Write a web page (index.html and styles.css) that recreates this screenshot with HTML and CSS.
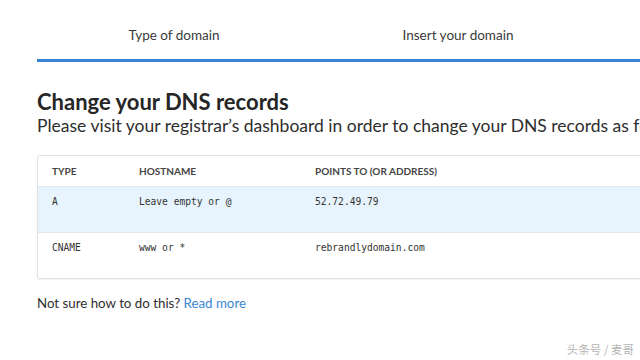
FILE: index.html
```html
<!DOCTYPE html>
<html lang="en">
<head>
    <meta charset="UTF-8">
    <meta name="viewport" content="width=device-width, initial-scale=1.0">
    <title>Change your DNS records</title>
    <link rel="stylesheet" href="styles.css">
</head>
<body>

<!-- Pasos -->
<div class="steps">
    <div class="step">Type of domain</div>
    <div class="step">Insert your domain</div>
</div>
<div class="progress"></div>

<div class="content">
    <h1>Change your DNS records</h1>
    <p class="subtitle">Please visit your registrar’s dashboard in order to change your DNS records as follows:</p>

    <!-- Tabla de registros -->
    <div class="records">
        <div class="row head">
            <span class="col-type">TYPE</span>
            <span class="col-host">HOSTNAME</span>
            <span class="col-points">POINTS TO (OR ADDRESS)</span>
        </div>
        <div class="row highlight">
            <span class="col-type">A</span>
            <span class="col-host">Leave empty or @</span>
            <span class="col-points">52.72.49.79</span>
        </div>
        <div class="row">
            <span class="col-type">CNAME</span>
            <span class="col-host">www or *</span>
            <span class="col-points">rebrandlydomain.com</span>
        </div>
    </div>

    <p class="help">Not sure how to do this? <a href="#">Read more</a></p>
</div>

<div class="watermark">头条号 / 麦哥</div>

</body>
</html>
```
FILE: styles.css
```css
* {
    margin: 0;
    padding: 0;
    box-sizing: border-box;
}
body {
    font-family: 'Lato', sans-serif;
    background-color: #fff;
    color: #2b2b2b;
    width: 640px;
    height: 360px;
    overflow: hidden;
    position: relative;
}
.steps {
    display: flex;
    padding-left: 32px;
    height: 59px;
}
.step {
    width: 284px;
    text-align: center;
    font-size: 13.5px;
    color: #3a3a3a;
    padding-top: 27px;
}
.progress {
    margin-left: 37px;
    height: 3px;
    background-color: #3a85d4;
}
.content {
    padding-left: 37px;
    padding-top: 28px;
}
h1 {
    font-size: 22px;
    font-weight: bold;
    color: #262626;
    line-height: 24px;
}
.subtitle {
    font-size: 17.5px;
    color: #2e2e2e;
    white-space: nowrap;
    line-height: 24px;
    margin-bottom: 17px;
}
.records {
    width: 640px;
    border: 1px solid #e1e1e1;
    border-radius: 3px;
    box-shadow: 0 1px 2px rgba(0, 0, 0, 0.06);
}
.row {
    display: flex;
    height: 46px;
    padding: 9px 0 0 14px;
    font-family: 'DejaVu Sans Mono', monospace;
    font-size: 9.6px;
    color: #333;
    border-top: 1px solid #e4e8ea;
}
.row.head {
    height: 30px;
    border-top: none;
    padding-top: 9px;
    font-family: 'Lato', sans-serif;
    font-weight: bold;
    font-size: 10px;
    color: #444;
}
.row.highlight {
    background-color: #e8f4fd;
}
.col-type {
    width: 87px;
}
.col-host {
    width: 176px;
}
.help {
    margin-top: 16px;
    font-size: 13.3px;
    color: #2e2e2e;
}
.help a {
    color: #3a87d2;
    text-decoration: none;
}
.watermark {
    position: absolute;
    right: 6px;
    bottom: 3px;
    font-family: 'Noto Sans CJK SC', sans-serif;
    font-size: 11.5px;
    color: #b5b5b5;
}
```
